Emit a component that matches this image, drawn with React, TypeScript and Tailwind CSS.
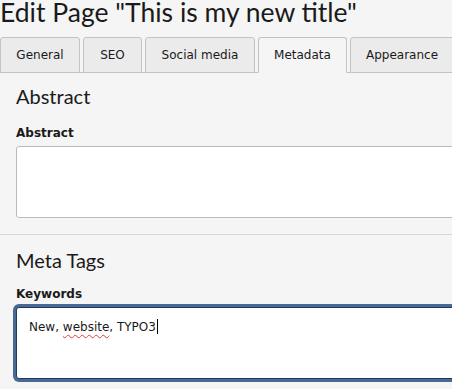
import React from 'react';

const tabs = [
  { label: 'General', w: 'w-[80px]' },
  { label: 'SEO', w: 'w-[59px]' },
  { label: 'Social media', w: 'w-[110px]' },
  { label: 'Metadata', w: 'w-[89px]', active: true },
  { label: 'Appearance', w: 'w-[104px]' },
];

const Field = ({ label, value, focused }: { label: string; value?: string; focused?: boolean }) => (
  <div className="pl-4">
    <label className="block text-[12px] font-bold leading-[18px] text-[#1a1a1a]">{label}</label>
    <div
      className={
        focused
          ? 'mt-[4px] h-[72px] w-[500px] rounded-[3px] border border-[#1d3a66] bg-white px-3 py-[8px] text-[12px] leading-[18px] text-[#1a1a1a] shadow-[0_0_0_3px_#4a6891]'
          : 'mt-[4px] h-[72px] w-[500px] rounded-[3px] border border-[#bbbbbb] bg-white'
      }
    >
      {value && (
        <span>
          New, <span className="underline decoration-wavy decoration-[#e53935] decoration-1 underline-offset-[3px]">website</span>, TYPO3
          <span className="ml-px inline-block h-[15px] w-px translate-y-[3px] bg-black" />
        </span>
      )}
    </div>
  </div>
);

export default function App() {
  return (
    <div className="h-[389px] w-[452px] overflow-hidden bg-[#f5f5f5] font-['DejaVu_Sans',Verdana,sans-serif] text-[#1a1a1a]">
      <h1 className="whitespace-nowrap font-['Lato','Open_Sans',sans-serif] text-[26.5px] leading-[24px] text-[#1a1a1a]">
        Edit Page "This is my new title"
      </h1>

      <div className="mt-[13px] flex gap-[3px] border-b border-[#c3c3c3]">
        {tabs.map((t) => (
          <div
            key={t.label}
            className={`${t.w} -mb-px flex h-[36px] shrink-0 items-center justify-center rounded-t-[3px] border border-[#c3c3c3] text-[12px] ${
              t.active ? 'border-b-[#f5f5f5] bg-[#f5f5f5]' : 'bg-[#ebebeb]'
            }`}
          >
            {t.label}
          </div>
        ))}
      </div>

      <h2 className="mt-[11px] px-4 font-['Lato',sans-serif] text-[20px] leading-[24px]">Abstract</h2>
      <div className="mt-[16px]">
        <Field label="Abstract" />
      </div>

      <hr className="mt-[16px] border-t border-[#d7d7d7]" />

      <h2 className="mt-[13px] px-4 font-['Lato',sans-serif] text-[20px] leading-[24px]">Meta Tags</h2>
      <div className="mt-[13px]">
        <Field label="Keywords" value="x" focused />
      </div>
    </div>
  );
}
